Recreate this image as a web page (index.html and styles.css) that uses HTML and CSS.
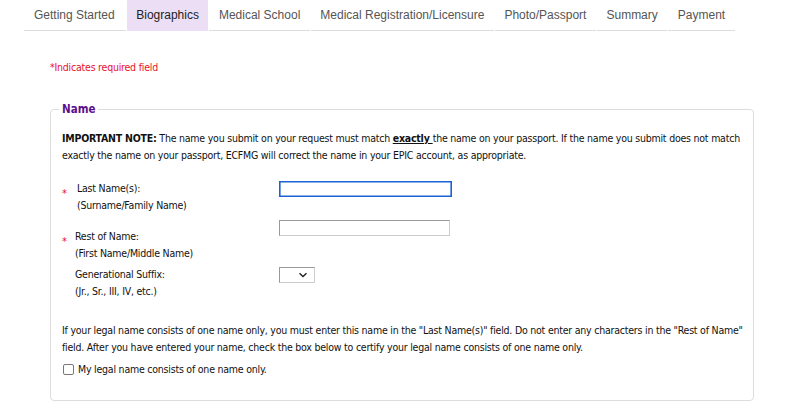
FILE: index.html
```html
<!DOCTYPE html>
<html lang="en">
<head>
<meta charset="utf-8">
<title>Biographics</title>
<link rel="stylesheet" href="styles.css">
</head>
<body>
<nav class="tabs">
  <a class="tab">Getting Started</a>
  <a class="tab active">Biographics</a>
  <a class="tab">Medical School</a>
  <a class="tab">Medical Registration/Licensure</a>
  <a class="tab">Photo/Passport</a>
  <a class="tab">Summary</a>
  <a class="tab">Payment</a>
</nav>
<main class="content">
  <p class="required-note">*Indicates required field</p>
  <fieldset class="panel">
    <legend class="panel-title">Name</legend>
    <p class="note"><b>IMPORTANT NOTE:</b> The name you submit on your request must match <b class="em">exactly </b>the name on your passport. If the name you submit does not match exactly the name on your passport, ECFMG will correct the name in your EPIC account, as appropriate.</p>
    <div class="field f-last">
      <span class="star">*</span>
      <label class="label l-last">Last Name(s):<br>(Surname/Family Name)</label>
      <input class="text focused" type="text">
    </div>
    <div class="field f-rest">
      <span class="star">*</span>
      <label class="label l-rest">Rest of Name:<br>(First Name/Middle Name)</label>
      <input class="text" type="text">
    </div>
    <div class="field f-suffix">
      <span class="star blank"></span>
      <label class="label l-rest">Generational Suffix:<br>(Jr., Sr., III, IV, etc.)</label>
      <span class="select"><svg width="10" height="6" viewBox="0 0 10 6"><path d="M1.5 1.2 5 4.5 8.5 1.2" fill="none" stroke="#222" stroke-width="1.4"/></svg></span>
    </div>
    <p class="note para">If your legal name consists of one name only, you must enter this name in the "Last Name(s)" field. Do not enter any characters in the "Rest of Name" field. After you have entered your name, check the box below to certify your legal name consists of one name only.</p>
    <label class="check"><span class="box"></span>My legal name consists of one name only.</label>
  </fieldset>
</main>
</body>
</html>
```
FILE: styles.css
```css
html, body { margin: 0; padding: 0; background: #fff; }
body {
  font-family: "DejaVu Sans Condensed", "DejaVu Sans", sans-serif;
  font-size: 10.5px;
  letter-spacing: -0.22px;
  color: #111;
  padding: 0 0 0 24px;
}
.tabs {
  display: flex;
  width: 708px;
  gap: 1px;
  height: 31px;
  letter-spacing: 0;
}
.tab {
  font-family: "Liberation Sans", Arial, sans-serif;
  font-size: 12px;
  color: #555;
  padding: 0 9.5px;
  line-height: 30px;
  border-bottom: 1px solid #ddd;
  white-space: nowrap;
}
.tab:first-child { padding: 0 11px 0 10px; }
.tab.active { background: #ecdff5; color: #222; border-bottom-color: #ecdff5; }
.content { padding-left: 26px; width: 704px; }
.required-note {
  color: #e8112d;
  margin: 29px 0 0 0;
  line-height: 14px;
}
.panel {
  margin: 28px 0 0 0;
  border: 1px solid #ddd;
  border-radius: 4px;
  padding: 0 5px 24px 11px;
  min-width: 0;
}
.panel-title {
  font-family: "DejaVu Sans Condensed", "DejaVu Sans", sans-serif;
  font-weight: bold;
  font-size: 11.5px;
  letter-spacing: 0;
  color: #5c0f8b;
  padding: 0 3px;
  margin-left: -3px;
  line-height: 14px;
}
.note { margin: 14px 0 0 0; line-height: 17px; }
.note b { font-weight: bold; }
.note .em { text-decoration: underline; }
.field {
  display: flex;
  align-items: flex-start;
  line-height: 17px;
}
.f-last { margin-top: 16px; }
.star {
  color: #e8112d;
  width: 15px;
  padding-top: 8px;
  font-size: 11px;
  line-height: 11px;
}
.star.blank { padding-top: 0; }
.label { width: 202px; }
.l-rest { margin-left: -2px; width: 204px; }
.f-rest { margin-top: 14px; }
.f-suffix { margin-top: 4px; }
.text {
  box-sizing: border-box;
  width: 171px;
  height: 16px;
  border: 1px solid #999;
  border-right-color: #ccc;
  border-bottom-color: #ccc;
  padding: 0;
  margin: 0;
  font-size: 11px;
  background: #fff;
  outline: none;
}
.text.focused {
  height: 16px;
  width: 173px;
  border: 1px solid #1a63d3;
  box-shadow: inset 0 0 0 0.6px #1a63d3;
  margin-top: 1px;
}
.f-rest .text { margin-top: -8px; }
.select {
  box-sizing: border-box;
  margin-top: 1px;
  width: 36px;
  height: 16px;
  border: 1px solid #999;
  border-right-color: #ccc;
  border-bottom-color: #ccc;
  display: flex;
  align-items: center;
  justify-content: flex-end;
  padding-right: 6px;
}
.para { margin-top: 22px; }
.check {
  display: flex;
  align-items: center;
  margin-top: 6px;
  line-height: 14px;
}
.box {
  box-sizing: border-box;
  width: 11px;
  height: 11px;
  border: 1px solid #777;
  border-radius: 2px;
  margin: 0 4px 0 1px;
  background: #fff;
}
```
